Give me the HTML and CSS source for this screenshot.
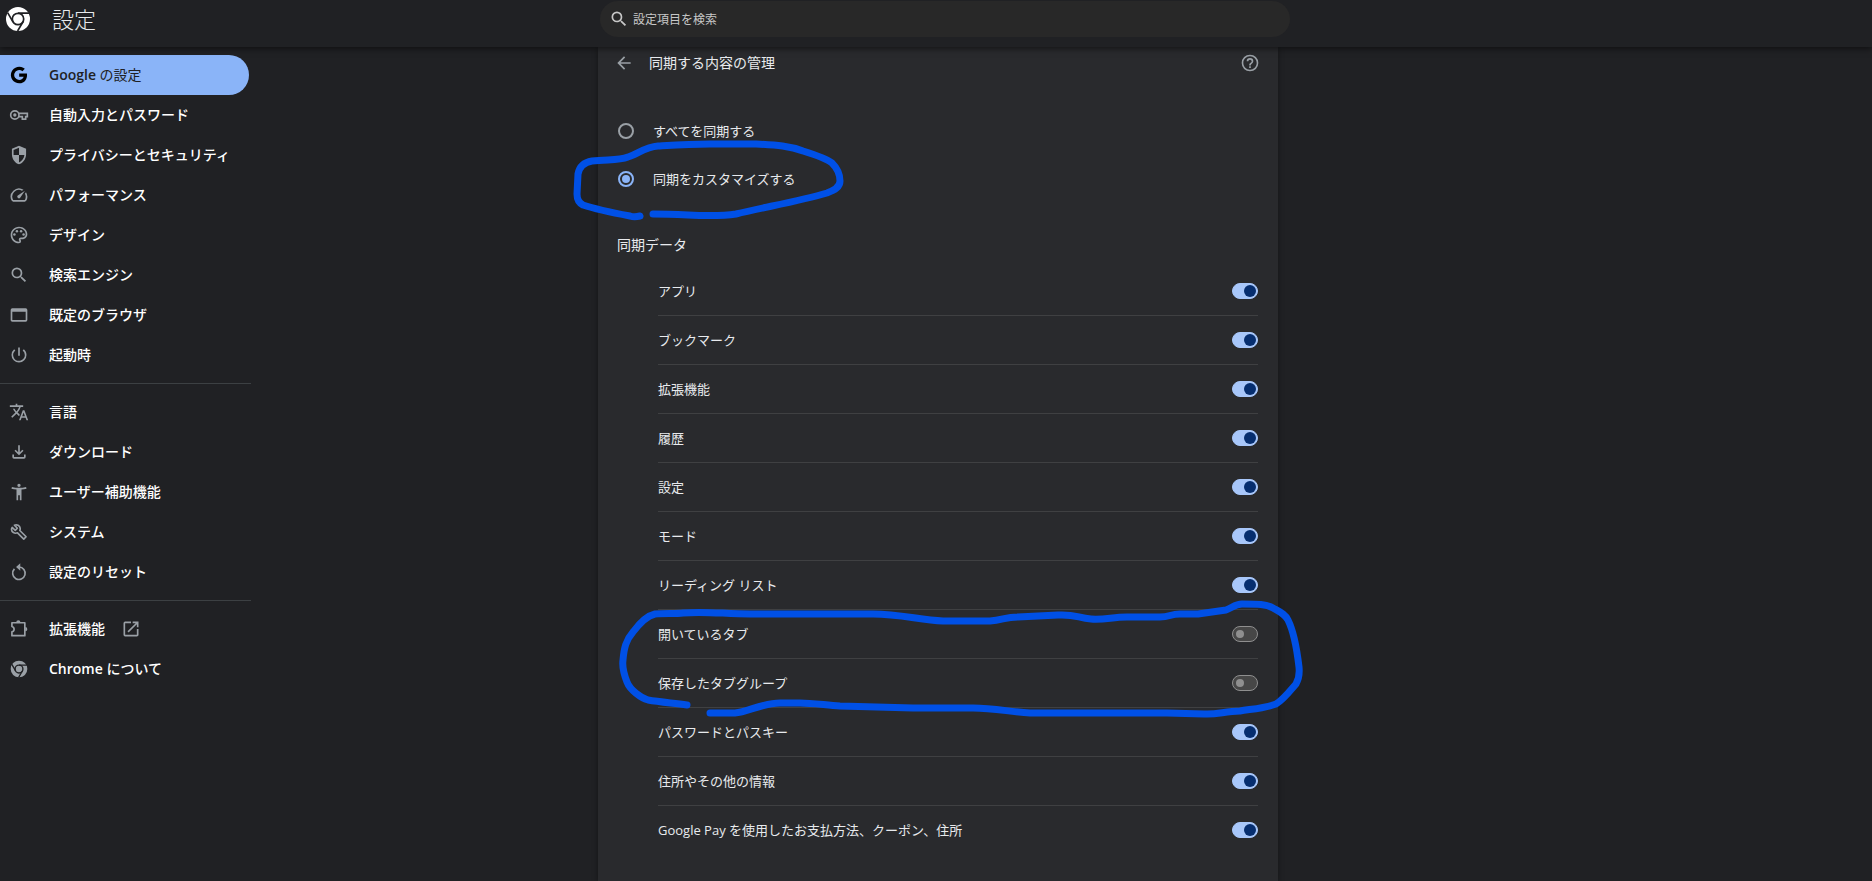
FILE: index.html
```html
<!DOCTYPE html>
<html lang="ja">
<head>
    <meta charset="UTF-8">
    <meta name="viewport" content="width=device-width, initial-scale=1">
    <title>設定</title>
    <link rel="stylesheet" href="styles.css">
</head>
<body>
    <header class="toolbar">
        <div class="brand">
            <svg class="brand-logo" viewBox="0 0 24 24">
                <circle cx="12" cy="12" r="12" fill="#fff"/>
                <g fill="none" stroke="#202124" stroke-width="1.7">
                    <circle cx="12" cy="12" r="5.7"/>
                    <path d="M12 6.2h11M7 14.9L1.6 5.6M17 14.9L11.6 24"/>
                </g>
            </svg>
            <h1>設定</h1>
        </div>
        <label class="search">
            <svg class="icon" viewBox="0 0 24 24"><path d="M15.5 14h-.79l-.28-.27A6.471 6.471 0 0 0 16 9.5 6.5 6.5 0 1 0 9.5 16c1.61 0 3.09-.59 4.23-1.57l.27.28v.79l5 4.99L20.49 19l-4.99-5zm-6 0C7.01 14 5 11.99 5 9.5S7.01 5 9.5 5 14 7.01 14 9.5 11.99 14 9.5 14z"/></svg>
            <input type="search" placeholder="設定項目を検索" aria-label="設定項目を検索">
        </label>
    </header>

    <div class="container">
        <nav class="sidebar">
            <a href="#google" class="selected">
                <svg class="icon" viewBox="0 0 24 24"><path d="M12.2 10.2v3.9h5.4c-.7 2.3-2.6 3.9-5.4 3.9a6 6 0 1 1 3.9-10.6L19 4.6A10 10 0 1 0 12.2 22c8.2 0 10-7.5 9.3-11.8z"/></svg>
                <span><b>Google</b> の設定</span>
            </a>
            <a href="#autofill">
                <svg class="icon" viewBox="0 0 24 24"><g fill="none" stroke="currentColor" stroke-width="2"><circle cx="7" cy="12" r="5"/><path d="M11.6 10H22v4h-2v3h-4v-3h-4.4"/></g><circle cx="7" cy="12" r="2"/></svg>
                <span>自動入力とパスワード</span>
            </a>
            <a href="#privacy">
                <svg class="icon" viewBox="0 0 24 24"><path d="M12 1L3.5 4.5V11c0 5.5 3.6 10.7 8.5 12 4.9-1.3 8.5-6.5 8.5-12V4.5zm0 2.2V12h6.500c-.5 4-3.1 7.700-6.500 8.900V12H5.500V5.900z"/></svg>
                <span>プライバシーとセキュリティ</span>
            </a>
            <a href="#performance">
                <svg class="icon" viewBox="0 0 24 24"><path d="M20.38 8.57l-1.23 1.85a8 8 0 0 1-.22 7.58H5.07A8 8 0 0 1 15.58 6.85l1.85-1.23A10 10 0 0 0 3.35 19a2 2 0 0 0 1.72 1h13.85a2 2 0 0 0 1.74-1 10 10 0 0 0-.27-10.44zm-9.79 6.84a2 2 0 0 0 2.83 0l5.66-8.49-8.49 5.66a2 2 0 0 0 0 2.83z"/></svg>
                <span>パフォーマンス</span>
            </a>
            <a href="#appearance">
                <svg class="icon" viewBox="0 0 24 24"><path d="M12 22C6.49 22 2 17.51 2 12S6.49 2 12 2s10 4.04 10 9c0 3.31-2.69 6-6 6h-1.77c-.28 0-.5.22-.5.5 0 .12.05.23.13.33.41.47.64 1.06.64 1.67A2.5 2.5 0 0 1 12 22zm0-18c-4.41 0-8 3.59-8 8s3.59 8 8 8c.28 0 .5-.22.5-.5a.54.54 0 0 0-.14-.35c-.41-.46-.63-1.05-.63-1.65a2.5 2.5 0 0 1 2.5-2.5H16c2.21 0 4-1.79 4-4 0-3.86-3.59-7-8-7z"/><circle cx="6.5" cy="11.5" r="1.5"/><circle cx="9.5" cy="7.5" r="1.5"/><circle cx="14.5" cy="7.5" r="1.5"/><circle cx="17.5" cy="11.5" r="1.5"/></svg>
                <span>デザイン</span>
            </a>
            <a href="#search">
                <svg class="icon" viewBox="0 0 24 24"><path d="M15.5 14h-.79l-.28-.27A6.471 6.471 0 0 0 16 9.5 6.5 6.5 0 1 0 9.5 16c1.61 0 3.09-.59 4.23-1.57l.27.28v.79l5 4.99L20.49 19l-4.99-5zm-6 0C7.01 14 5 11.99 5 9.5S7.01 5 9.5 5 14 7.01 14 9.5 11.99 14 9.5 14z"/></svg>
                <span>検索エンジン</span>
            </a>
            <a href="#browser">
                <svg class="icon" viewBox="0 0 24 24"><path d="M20 4H4a2 2 0 0 0-2 2v12c0 1.1.9 2 2 2h16a2 2 0 0 0 2-2V6a2 2 0 0 0-2-2zm0 14H4V8h16z"/></svg>
                <span>既定のブラウザ</span>
            </a>
            <a href="#startup">
                <svg class="icon" viewBox="0 0 24 24"><path d="M13 3h-2v10h2V3zm4.83 2.17l-1.42 1.42A6.92 6.92 0 0 1 19 12c0 3.87-3.13 7-7 7A6.995 6.995 0 0 1 7.58 6.58L6.17 5.17A8.932 8.932 0 0 0 3 12a9 9 0 0 0 18 0c0-2.74-1.23-5.18-3.17-6.83z"/></svg>
                <span>起動時</span>
            </a>
            <hr>
            <a href="#languages">
                <svg class="icon" viewBox="0 0 24 24"><path d="M12.87 15.07l-2.54-2.51.03-.03A17.52 17.52 0 0 0 14.07 6H17V4h-7V2H8v2H1v1.99h11.17C11.5 7.92 10.44 9.75 9 11.35 8.07 10.32 7.3 9.19 6.69 8h-2c.73 1.63 1.73 3.17 2.98 4.56l-5.09 5.02L4 19l5-5 3.11 3.11.76-2.04zM18.5 10h-2L12 22h2l1.12-3h4.75L21 22h2l-4.5-12zm-2.62 7l1.62-4.33L19.12 17h-3.24z"/></svg>
                <span>言語</span>
            </a>
            <a href="#downloads">
                <svg class="icon" viewBox="0 0 24 24"><path d="M13 4v8.2l3-3 1.4 1.4L12 16l-5.4-5.4L8 9.2l3 3V4zM4 15h2v3h12v-3h2v3a2 2 0 0 1-2 2H6a2 2 0 0 1-2-2z"/></svg>
                <span>ダウンロード</span>
            </a>
            <a href="#accessibility">
                <svg class="icon" viewBox="0 0 24 24"><path d="M20.5 6c-2.61.7-5.67 1-8.5 1s-5.89-.3-8.5-1L3 8c1.86.5 4 .83 6 1v13h2v-6h2v6h2V9c2-.17 4.14-.5 6-1l-.5-2zM12 6a2 2 0 1 0 0-4 2 2 0 0 0 0 4z"/></svg>
                <span>ユーザー補助機能</span>
            </a>
            <a href="#system">
                <svg class="icon" viewBox="0 0 24 24"><path fill="none" stroke="currentColor" stroke-width="2" stroke-linejoin="round" d="M3.800 6.500l3.700 3.500 2.500-2.500L6.500 3.800C9.500 2.500 13 4.300 13.400 7.300c.2 1 0 2-.4 2.900l7.500 7.500-2.800 2.800-7.500-7.500c-3.700 1.500-7-1-7.200-4.200 0-.8.3-1.600.8-2.300z"/></svg>
                <span>システム</span>
            </a>
            <a href="#reset">
                <svg class="icon" viewBox="0 0 24 24"><path fill="none" stroke="currentColor" stroke-width="2" d="M6.500 8.300A7.500 7.500 0 1 0 12 6"/><path d="M13.500 1.500v9L8.500 6z"/></svg>
                <span>設定のリセット</span>
            </a>
            <hr>
            <a href="#extensions">
                <svg class="icon" viewBox="0 0 24 24"><path fill="none" stroke="currentColor" stroke-width="2" stroke-linejoin="round" d="M3.500 4.500H19V20H3.500v-4.500c3.500-.8 3.500-5.700 0-6.500z"/><path d="M8.700 4a2.500 2.500 0 0 1 5 0zM19.500 9.700a2.500 2.500 0 0 1 0 5z"/></svg>
                <span>拡張機能</span>
                <svg class="icon launch" viewBox="0 0 24 24"><path d="M19 19H5V5h7V3H5a2 2 0 0 0-2 2v14a2 2 0 0 0 2 2h14c1.1 0 2-.9 2-2v-7h-2v7zM14 3v2h3.59l-9.83 9.83 1.41 1.41L19 6.41V10h2V3h-7z"/></svg>
            </a>
            <a href="#about">
                <svg class="icon" viewBox="0 0 24 24">
                    <circle cx="12" cy="12" r="10"/>
                    <g fill="none" stroke="#202124" stroke-width="1.7">
                        <circle cx="12" cy="12" r="4.7"/>
                        <path d="M12 7.3h9.5M8 14.4L3.4 6.5M16 14.4L11.5 22.2"/>
                    </g>
                </svg>
                <span><b>Chrome</b> について</span>
            </a>
        </nav>

        <main class="card">
            <div class="card-header">
                <button type="button" aria-label="戻る">
                    <svg class="icon" viewBox="0 0 24 24"><path d="M20 11H7.83l5.59-5.59L12 4l-8 8 8 8 1.41-1.41L7.83 13H20v-2z"/></svg>
                </button>
                <h2>同期する内容の管理</h2>
                <a href="#help" aria-label="ヘルプ">
                    <svg class="icon" viewBox="0 0 24 24"><path d="M11 18h2v-2h-2v2zm1-16a10 10 0 1 0 0 20 10 10 0 0 0 0-20zm0 18c-4.41 0-8-3.59-8-8s3.59-8 8-8 8 3.59 8 8-3.59 8-8 8zm0-14a4 4 0 0 0-4 4h2c0-1.1.9-2 2-2s2 .9 2 2c0 2-3 1.75-3 5h2c0-2.25 3-2.5 3-5a4 4 0 0 0-4-4z"/></svg>
                </a>
            </div>

            <div class="radio-group">
                <label><input type="radio" name="sync"> すべてを同期する</label>
                <label><input type="radio" name="sync" checked> 同期をカスタマイズする</label>
            </div>

            <h3>同期データ</h3>
            <div class="sync-list">
                <label>アプリ <input type="checkbox" checked></label>
                <label>ブックマーク <input type="checkbox" checked></label>
                <label>拡張機能 <input type="checkbox" checked></label>
                <label>履歴 <input type="checkbox" checked></label>
                <label>設定 <input type="checkbox" checked></label>
                <label>モード <input type="checkbox" checked></label>
                <label>リーディング リスト <input type="checkbox" checked></label>
                <label>開いているタブ <input type="checkbox"></label>
                <label>保存したタブグループ <input type="checkbox"></label>
                <label>パスワードとパスキー <input type="checkbox" checked></label>
                <label>住所やその他の情報 <input type="checkbox" checked></label>
                <label>Google Pay を使用したお支払方法、クーポン、住所 <input type="checkbox" checked></label>
            </div>

            <!-- hand-drawn circles -->
            <svg class="marker" viewBox="598 47 680 834">
                <path d="M640 216C636 217 633 217 630 216C614 213 595 209 583 205Q577 202 577 194L578 174Q580 163 592 161C607 159 618 161 628 157C638 154 645 147 658 146C675 145 690 144 710 144H756C777 145 790 146 803 151C816 155 827 159 832 163C837 168 840 175 840 181C840 187 835 190 827 193C800 201 765 207 736 214C710 218 690 214 653 214"/>
                <path d="M687 705C672 703 660 702 648 700C641 698 630 690 627 682C623 672 622 667 623 660C624 648 626 640 633 632C639 624 646 616 655 614C665 613 675 614 683 613C705 611 725 614 750 614H873C900 614 920 620 943 621H990C1003 620 1005 617 1018 617L1058 615C1075 614 1078 618 1091 619C1105 620 1112 617 1127 617H1160C1170 617 1170 614 1180 614H1198L1226 610C1232 608 1235 604 1242 604C1258 604 1266 604 1273 608C1280 612 1285 614 1288 620C1294 632 1297 650 1299 667Q1300 677 1296 684C1290 691 1283 700 1276 704C1265 708 1252 709 1240 711C1225 711 1217 715 1204 714L1167 713H1030C1010 712 995 708 973 708H913L840 706C825 705 812 703 800 703H780C762 703 748 712 735 713H710"/>
            </svg>
        </main>
    </div>
</body>
</html>
```

FILE: styles.css
```css
* {
    box-sizing: border-box;
}

body {
    margin: 0;
    min-height: 100vh;
    display: flex;
    flex-direction: column;
    background-color: #202124;
    color: #e8eaed;
    font-family: "Open Sans", "Noto Sans CJK JP", sans-serif;
    font-size: 13px;
    line-height: 20px;
}

h1, h2, h3 {
    margin: 0;
    font-weight: 400;
}

.icon {
    width: 20px;
    height: 20px;
    flex: none;
    fill: currentColor;
    color: #9aa0a6;
}

/* Top bar */
.toolbar {
    display: grid;
    grid-template-columns: 1fr 690px 1fr;
    align-items: start;
    height: 47px;
    padding-left: 18px;
    background-color: #202124;
    box-shadow: 0 2px 6px rgba(0, 0, 0, 0.5);
    z-index: 1;
}

.brand {
    display: flex;
    align-items: center;
    gap: 22px;
    height: 37px;
    margin-left: -12px;
}

.brand-logo {
    width: 24px;
    height: 24px;
}

.brand h1 {
    font-size: 22px;
    font-weight: 300;
    line-height: 36px;
}

.search {
    display: flex;
    align-items: center;
    gap: 4px;
    height: 36px;
    margin-top: 1px;
    padding: 0 9px;
    border-radius: 18px;
    background-color: #282828;
}

.search .icon {
    color: #c7c7c7;
}

.search input {
    flex: 1;
    padding: 0;
    border: none;
    outline: none;
    background: none;
    color: #c7c7c7;
    font-family: inherit;
    font-size: 12px;
}

.search input::placeholder {
    color: #c7c7c7;
}

.container {
    flex: 1;
    display: grid;
    grid-template-columns: 1fr 680px 1fr;
    padding-left: 4px;
}

/* Left menu */
.sidebar {
    width: 251px;
    margin-left: -4px;
    padding-top: 8px;
}

.sidebar a {
    display: flex;
    align-items: center;
    gap: 20px;
    height: 40px;
    margin-right: 2px;
    padding-left: 9px;
    border-radius: 0 20px 20px 0;
    color: #fff;
    font-size: 14px;
    font-weight: 500;
    text-decoration: none;
}

.sidebar b {
    font-weight: 600;
}

.sidebar .selected {
    background-color: #8ab4f8;
    color: #202124;
    font-weight: 400;
}

.sidebar .selected .icon {
    color: #000;
}

.sidebar .launch {
    margin-left: -4px;
}

.sidebar hr {
    height: 1px;
    margin: 8px 0;
    border: none;
    background-color: #3c4043;
}

/* Sync settings */
.card {
    position: relative;
    background-color: #292a2d;
    box-shadow: 0 1px 6px rgba(0, 0, 0, 0.4);
}

.card-header {
    display: flex;
    align-items: center;
    height: 32px;
    padding: 0 18px 0 16px;
}

.card-header button {
    display: flex;
    padding: 0;
    border: none;
    background: none;
}

.card-header h2 {
    flex: 1;
    margin-left: 15px;
    font-size: 14px;
}

.card-header a {
    display: flex;
}

.radio-group {
    margin-top: 28px;
    padding: 0 20px;
}

.radio-group label {
    display: flex;
    align-items: center;
    gap: 19px;
    height: 48px;
}

.radio-group input {
    appearance: none;
    display: grid;
    place-items: center;
    width: 16px;
    height: 16px;
    margin: 0;
    border: 2px solid #9aa0a6;
    border-radius: 50%;
}

.radio-group input:checked {
    border-color: #8ab4f8;
}

.radio-group input:checked::before {
    content: "";
    width: 8px;
    height: 8px;
    border-radius: 50%;
    background-color: #8ab4f8;
}

.card h3 {
    margin-top: 20px;
    padding: 0 19px;
    font-size: 14px;
    line-height: 44px;
}

.sync-list {
    padding: 0 20px 0 60px;
}

.sync-list label {
    display: flex;
    align-items: center;
    justify-content: space-between;
    height: 49px;
    border-bottom: 1px solid #3f4042;
}

.sync-list label:last-child {
    border-bottom-color: transparent;
}

/* Toggle switch */
.sync-list input {
    appearance: none;
    display: flex;
    align-items: center;
    width: 26px;
    height: 16px;
    margin: 0;
    padding: 0 3px;
    border: 1px solid #8f8f8f;
    border-radius: 8px;
    background-color: #474747;
}

.sync-list input::before {
    content: "";
    width: 8px;
    height: 8px;
    border-radius: 50%;
    background-color: #8f8f8f;
}

.sync-list input:checked {
    justify-content: flex-end;
    padding: 0 1px;
    border-color: #a8c7fa;
    background-color: #a8c7fa;
}

.sync-list input:checked::before {
    width: 12px;
    height: 12px;
    background-color: #062e6f;
}

.marker {
    position: absolute;
    top: 0;
    left: 0;
    width: 680px;
    height: 834px;
    overflow: visible;
    pointer-events: none;
    fill: none;
    stroke: #0050e6;
    stroke-width: 7;
    stroke-linecap: round;
    stroke-linejoin: round;
}
```
